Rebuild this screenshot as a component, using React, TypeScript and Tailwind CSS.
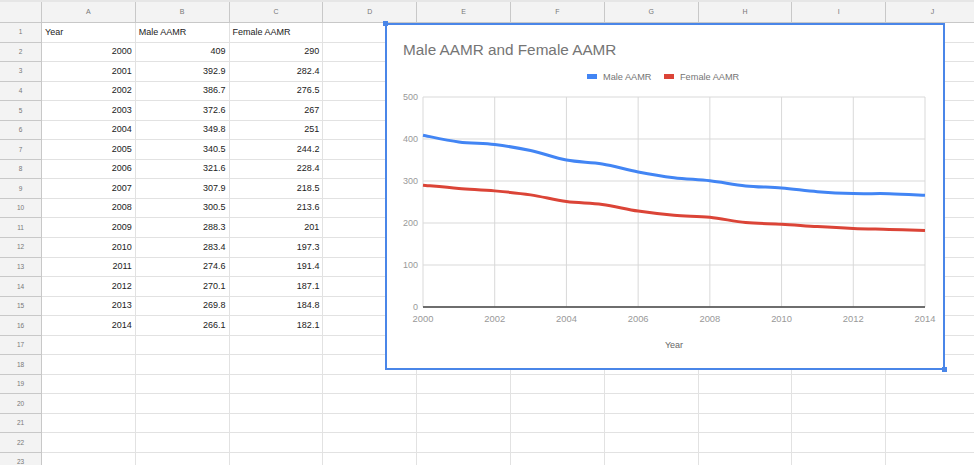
import React from 'react';

const rows: [number, number, number][] = [
  [2000, 409, 290],
  [2001, 392.9, 282.4],
  [2002, 386.7, 276.5],
  [2003, 372.6, 267],
  [2004, 349.8, 251],
  [2005, 340.5, 244.2],
  [2006, 321.6, 228.4],
  [2007, 307.9, 218.5],
  [2008, 300.5, 213.6],
  [2009, 288.3, 201],
  [2010, 283.4, 197.3],
  [2011, 274.6, 191.4],
  [2012, 270.1, 187.1],
  [2013, 269.8, 184.8],
  [2014, 266.1, 182.1],
];

const columns = ['A', 'B', 'C', 'D', 'E', 'F', 'G', 'H', 'I', 'J'];

// plot area, in chart-box coordinates (outer edge of the blue border)
const PL = 38;
const PR = 540;
const PT = 74;
const PB = 284;

const px = (year: number) => PL + ((year - 2000) * (PR - PL)) / 14;
const py = (v: number) => PB - (v * (PB - PT)) / 500;

function smoothPath(points: [number, number][]) {
  let d = `M${points[0][0]},${points[0][1]}`;
  for (let i = 0; i < points.length - 1; i++) {
    const p0 = points[i - 1] ?? points[i];
    const p1 = points[i];
    const p2 = points[i + 1];
    const p3 = points[i + 2] ?? p2;
    const c1x = p1[0] + (p2[0] - p0[0]) / 6;
    const c1y = p1[1] + (p2[1] - p0[1]) / 6;
    const c2x = p2[0] - (p3[0] - p1[0]) / 6;
    const c2y = p2[1] - (p3[1] - p1[1]) / 6;
    d += ` C${c1x},${c1y} ${c2x},${c2y} ${p2[0]},${p2[1]}`;
  }
  return d;
}

function Chart() {
  const male = smoothPath(rows.map((r) => [px(r[0]), py(r[1])]));
  const female = smoothPath(rows.map((r) => [px(r[0]), py(r[2])]));
  const years = [2000, 2002, 2004, 2006, 2008, 2010, 2012, 2014];
  const ticks = [0, 100, 200, 300, 400, 500];

  return (
    <div className="absolute left-[385px] top-[23px] w-[560px] h-[347px] border-2 border-[#4a86e8] bg-white">
      <svg width={556} height={343} className="block" style={{ fontFamily: '"Liberation Sans", Arial, sans-serif' }}>
        <g transform="translate(-2,-2)">
          <text x={18} y={32} fontSize={15.3} fill="#757575">
            Male AAMR and Female AAMR
          </text>

          {/* Legend */}
          <rect x={202} y={51} width={10} height={5} fill="#4285f4" />
          <text x={218} y={56.5} fontSize={9.2} fill="#757575">
            Male AAMR
          </text>
          <rect x={279} y={51} width={10} height={5} fill="#db4437" />
          <text x={295} y={56.5} fontSize={9.2} fill="#757575">
            Female AAMR
          </text>

          {/* Gridlines */}
          {ticks.map((t) => (
            <line key={t} x1={PL} x2={PR} y1={py(t)} y2={py(t)} stroke="#d9d9d9" strokeWidth={1} />
          ))}
          {years.map((y) => (
            <line key={y} x1={px(y)} x2={px(y)} y1={PT} y2={PB} stroke="#d9d9d9" strokeWidth={1} />
          ))}
          <line x1={PL} x2={PR} y1={PB} y2={PB} stroke="#444" strokeWidth={1.5} />

          {/* Axis labels */}
          {ticks.map((t) => (
            <text key={t} x={33} y={py(t) + 3} fontSize={9} fill="#999" textAnchor="end">
              {t}
            </text>
          ))}
          {years.map((y) => (
            <text key={y} x={px(y)} y={299} fontSize={9.4} fill="#999" textAnchor="middle">
              {y}
            </text>
          ))}
          <text x={289} y={325} fontSize={9} fill="#666" textAnchor="middle">
            Year
          </text>

          {/* Series */}
          <path d={male} fill="none" stroke="#4285f4" strokeWidth={3} strokeLinejoin="round" />
          <path d={female} fill="none" stroke="#db4437" strokeWidth={3} strokeLinejoin="round" />
        </g>
      </svg>
      <div className="absolute -left-[4px] -top-[4px] w-[5px] h-[5px] bg-[#4a86e8]" />
      <div className="absolute -right-[4px] -bottom-[4px] w-[5px] h-[5px] bg-[#4a86e8]" />
    </div>
  );
}

export default function App() {
  const totalRows = 23;

  return (
    <div
      className="relative w-[974px] h-[465px] overflow-hidden bg-white text-[#222]"
      style={{ fontFamily: '"Liberation Sans", Arial, sans-serif' }}
    >
      {/* Column header */}
      <div className="flex h-[23px] border-t-2 border-[#e6e6e6] bg-[#f3f3f3]">
        <div className="w-[42px] shrink-0 border-r border-b border-[#c8c8c8]" />
        {columns.map((c) => (
          <div
            key={c}
            className="w-[93.8px] shrink-0 flex items-center justify-center border-r border-b border-[#c8c8c8] text-[7px] text-[#777]"
          >
            {c}
          </div>
        ))}
      </div>

      {/* Rows */}
      {Array.from({ length: totalRows }, (_, i) => {
        const n = i + 1;
        const data = n >= 2 && n <= 16 ? rows[n - 2] : null;
        const cells: (string | null)[] =
          n === 1
            ? ['Year', 'Male AAMR', 'Female AAMR']
            : data
              ? [String(data[0]), String(data[1]), String(data[2])]
              : [];
        return (
          <div key={n} className="flex h-[19.55px]">
            <div className="w-[42px] shrink-0 flex items-center justify-center bg-[#f3f3f3] border-r border-b border-[#c8c8c8] text-[6.5px] text-[#777]">
              {n}
            </div>
            {columns.map((c, ci) => (
              <div
                key={c}
                className={`w-[93.8px] shrink-0 flex items-center px-[3px] border-r border-b border-[#e2e2e2] text-[9px] ${
                  n === 1 ? 'justify-start' : 'justify-end'
                }`}
              >
                {cells[ci] ?? ''}
              </div>
            ))}
          </div>
        );
      })}

      <Chart />
    </div>
  );
}
